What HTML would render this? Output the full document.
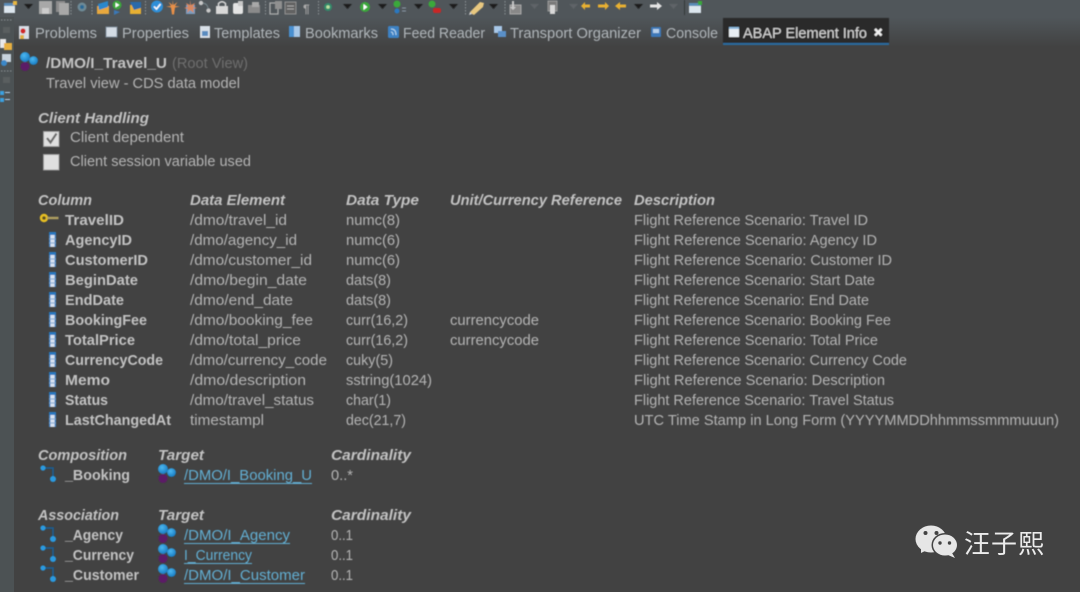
<!DOCTYPE html>
<html><head><meta charset="utf-8"><style>
html,body{margin:0;padding:0;background:#424242;width:1080px;height:592px;overflow:hidden}
svg{display:block}
text{font-family:"Liberation Sans","Noto Sans CJK SC",sans-serif;font-size:15px;fill:#b4b4b4}
.b{font-weight:bold;fill:#c2c2c2}
.h{font-weight:bold;font-style:italic;fill:#c2c2c2}
.l{fill:#62aed2}
.t{fill:#b0b6ba}
</style></head><body>
<svg width="1080" height="592" viewBox="0 0 1080 592" xmlns="http://www.w3.org/2000/svg">
<defs>
<linearGradient id="tabbg" x1="0" y1="0" x2="0" y2="1"><stop offset="0" stop-color="#50565a"/><stop offset="1" stop-color="#424242"/></linearGradient>
<radialGradient id="bl" cx=".4" cy=".35" r=".7"><stop offset="0" stop-color="#4cb8f0"/><stop offset="1" stop-color="#1478c0"/></radialGradient>
<filter id="soft" x="-5%" y="-5%" width="110%" height="110%"><feGaussianBlur stdDeviation="0.45"/></filter>
<g id="cds"><circle cx="6" cy="14.500" r="4.500" fill="#5c1a66"/><circle cx="6" cy="5" r="5" fill="url(#bl)"/><circle cx="14.500" cy="8.500" r="4.400" fill="url(#bl)"/></g>
<g id="assoc"><path d="M3 3H13V13" fill="none" stroke="#1a5f98" stroke-width="1.500"/><circle cx="3" cy="3" r="2.600" fill="#2a9ae0"/><circle cx="13" cy="14" r="3" fill="#2a9ae0"/></g>
<g id="col"><rect x="0" y="0" width="7" height="15" fill="#d8e2f0"/><rect x="0" y="0" width="7" height="3" fill="#2a78c0"/><rect x="0" y="3" width="1.500" height="12" fill="#4a88c8"/><rect x="5.500" y="3" width="1.500" height="12" fill="#4a88c8"/><rect x="0" y="6.500" width="7" height="1" fill="#7aa4d0"/><rect x="0" y="10.500" width="7" height="1" fill="#7aa4d0"/></g>
<polygon id="arr" points="0,0 9,0 4.500,5" fill="#1e1e1e"/>
</defs>
<rect width="1080" height="592" fill="#424242"/>
<rect width="1080" height="17" fill="#50565a"/>
<rect y="17" width="1080" height="30" fill="url(#tabbg)"/>
<rect y="17" width="14" height="575" fill="#4c5254"/>
<g filter="url(#soft)">
<!-- toolbar -->
<rect x="4" y="4" width="11" height="9" fill="#dce6ee"/><rect x="4" y="3" width="11" height="3" fill="#5a8cb8"/><rect x="13" y="1" width="4" height="4" fill="#e8b840"/>
<use href="#arr" x="24" y="4"/>
<rect x="39" y="1" width="13" height="13" fill="#a8a8a8"/><rect x="42" y="8" width="7" height="6" fill="#cccccc"/>
<rect x="56" y="1" width="9" height="11" fill="#8c8c8c"/><rect x="59" y="3" width="10" height="12" fill="#a8a8a8"/>
<path d="M71 1v14" stroke="#8c9296" stroke-dasharray="1.500 1.500"/>
<circle cx="82" cy="7" r="4.500" fill="#6e8a96"/><circle cx="82" cy="7" r="2" fill="#2a6a96"/>
<path d="M92 1v14" stroke="#8c9296" stroke-dasharray="1.500 1.500"/>
<rect x="97" y="6" width="12" height="8" fill="#e8a83c"/><path d="M98 4l10-3v6l-9 3z" fill="#2a88cc"/>
<circle cx="117" cy="5" r="4.500" fill="#3aa83a"/><path d="M115.500 2.500l4 2.500-4 2.500z" fill="#fff"/><path d="M114 10l6 2-6 3z" fill="#3a78b8"/>
<rect x="130" y="5" width="11" height="9" fill="#e8b030"/><path d="M130 2h11v6l-7 2z" fill="#2a6aaa"/>
<path d="M145.500 1v14" stroke="#8c9296" stroke-dasharray="1.500 1.500"/>
<circle cx="157" cy="6.500" r="6" fill="#2e8fd8"/><path d="M154 6.500l2.500 2.500 4-5" stroke="#fff" stroke-width="1.500" fill="none"/>
<path d="M172.500 0l1 5 4-3-2.500 4 5 .5-5 1-1 7h-2l-1-7-5-1 5-.5-2.500-4 4 3z" fill="#e89048"/>
<rect x="186" y="5" width="9" height="9" fill="#7a9cc0"/><path d="M190 0l1 5 4-2-2 4 4 1-4 1 1 4-4-3-3 3 1-4-4-1 4-1-2-4 4 2z" fill="#d88860"/>
<circle cx="201" cy="3" r="2.200" fill="#c8c8c8"/><circle cx="208.500" cy="10.500" r="2.200" fill="#c8c8c8"/><path d="M203 3q5 1 5 6" stroke="#7a8a90" fill="none"/>
<rect x="216" y="6" width="12" height="8" fill="#d8d8d8"/><path d="M218.500 6V3.500q3.500-3.500 7 0V6" fill="none" stroke="#d8d8d8" stroke-width="1.500"/>
<rect x="233" y="3" width="10" height="11" rx="2" fill="#e4e4e4"/><rect x="238" y="1" width="5" height="5" fill="#c8c8c8"/>
<rect x="248" y="5" width="12" height="8" fill="#8a8a8a"/><rect x="252" y="2" width="7" height="5" fill="#a8a8a8"/>
<path d="M265.500 1v14" stroke="#8c9296" stroke-dasharray="1.500 1.500"/>
<rect x="270" y="3" width="8" height="11" fill="none" stroke="#b0b0b0" stroke-width="1.200"/><rect x="275" y="1" width="7" height="8" fill="#909090"/>
<rect x="285" y="2" width="11" height="12" fill="#626262" stroke="#909090"/><path d="M287 6h7M287 9h7" stroke="#aaa"/>
<text x="303" y="13" style="font-size:12px;fill:#a8a8a8" font-weight="bold">¶</text>
<path d="M318.500 1v14" stroke="#8c9296" stroke-dasharray="1.500 1.500"/>
<circle cx="328" cy="7" r="4" fill="#308a6a"/><circle cx="328" cy="7" r="1.800" fill="#bce0a0"/>
<use href="#arr" x="343" y="4"/>
<circle cx="365" cy="7" r="5" fill="#3aa83a"/><path d="M363.500 4l4 3-4 3z" fill="#fff"/>
<use href="#arr" x="378" y="4"/>
<circle cx="397" cy="4" r="3.500" fill="#3aa83a"/><circle cx="397" cy="11" r="2.500" fill="#2a78c0"/><path d="M402 8h4M402 11h4" stroke="#8a9aa8"/>
<use href="#arr" x="414" y="4"/>
<circle cx="432" cy="4" r="3.500" fill="#3aa83a"/><rect x="433" y="8" width="8" height="5" rx="2" fill="#c82828"/>
<use href="#arr" x="449" y="4"/>
<path d="M465.500 1v14" stroke="#8c9296" stroke-dasharray="1.500 1.500"/>
<path d="M472 14l-2-2 10-10 4 1-1 4-9 8z" fill="#e8c880"/><path d="M470 12l2 2-3 1z" fill="#ddd"/>
<use href="#arr" x="489" y="4"/>
<path d="M505 1v14" stroke="#8c9296" stroke-dasharray="1.500 1.500"/>
<rect x="510" y="5" width="11" height="9" fill="#888" stroke="#a8a8a8"/><path d="M512 1v6h-2l3 3 3-3h-2V1z" fill="#c8c8c8"/>
<polygon points="530,4 539,4 534.500,9" fill="#5e6468"/>
<rect x="548" y="1" width="9" height="10" fill="#7a7a7a" stroke="#9a9a9a"/><path d="M550 5h5v9h-5z" fill="#d8d8d8"/>
<polygon points="569,4 578,4 573.500,9" fill="#5e6468"/>
<path d="M581 6l4-4v2.500h5v3h-5V10z" fill="#e8b030"/>
<path d="M609 6l-4-4v2.500h-7v3h7V10z" fill="#e8b030"/>
<path d="M615 6l5-4v2.500h6v3h-6V10z" fill="#e8b030"/>
<use href="#arr" x="634" y="4"/>
<path d="M662 6l-5-4v2.500h-7v3h7V10z" fill="#e4e4e4"/>
<polygon points="669,4 678,4 673.500,9" fill="#5e6468"/>
<rect x="684" y="0" width="1" height="15" fill="#33383a"/>
<rect x="689" y="4" width="12" height="9" fill="#dce6ee"/><rect x="689" y="3" width="12" height="3" fill="#5a8cb8"/><rect x="698" y="1" width="4" height="4" fill="#3aa83a"/>
<!-- tab icons -->
<rect x="19" y="26" width="10" height="13" fill="#d8dee6"/><circle cx="23" cy="31" r="2.600" fill="#d02828"/><rect x="20" y="35" width="4" height="4" fill="#e0b040"/>
<rect x="106" y="27" width="11" height="10" fill="#d4dce4" stroke="#7a8a9a"/>
<rect x="200" y="26" width="10" height="12" fill="#d8e0e8"/><rect x="202" y="31" width="6" height="5" fill="#5a8cc0"/>
<rect x="289" y="26" width="5" height="11" fill="#4a90d0"/><rect x="294" y="26" width="6" height="11" fill="#a8c8e8"/>
<rect x="388" y="26" width="11" height="12" rx="1.500" fill="#3e82c4"/><path d="M391 29q5 0 5 6M391 32q2 0 2 3" stroke="#b8d8f0" fill="none"/>
<rect x="494" y="26" width="8" height="7" fill="#a8c8e8"/><rect x="498" y="31" width="8" height="6" fill="#5a90c8"/>
<rect x="651" y="27" width="10" height="10" rx="1" fill="#3e78b8"/><rect x="653" y="29" width="6" height="4" fill="#b8d0ea"/>
<!-- active tab -->
<rect x="723" y="18" width="166" height="26" fill="#2a2a2a"/>
<rect x="723" y="43" width="166" height="2" fill="#2c6a9e"/>
<rect x="729" y="27" width="10" height="10" fill="#e8eef2"/><rect x="729" y="27" width="10" height="2" fill="#8cb8dc"/>
<path d="M875 29l6.500 6.500M881.500 29l-6.500 6.500" stroke="#f0f0f0" stroke-width="2.400"/>
<text x="35" y="38" textLength="62" lengthAdjust="spacingAndGlyphs" class="t">Problems</text>
<text x="122" y="38" textLength="67" lengthAdjust="spacingAndGlyphs" class="t">Properties</text>
<text x="214" y="38" textLength="66" lengthAdjust="spacingAndGlyphs" class="t">Templates</text>
<text x="305" y="38" textLength="73" lengthAdjust="spacingAndGlyphs" class="t">Bookmarks</text>
<text x="403" y="38" textLength="82" lengthAdjust="spacingAndGlyphs" class="t">Feed Reader</text>
<text x="510" y="38" textLength="131" lengthAdjust="spacingAndGlyphs" class="t">Transport Organizer</text>
<text x="666" y="38" textLength="52" lengthAdjust="spacingAndGlyphs" class="t">Console</text>
<text x="743" y="38" textLength="124" lengthAdjust="spacingAndGlyphs" style="fill:#d4d4d4">ABAP Element Info</text>
<!-- left strip -->
<path d="M1 20h12M1 71h12" stroke="#8c9296" stroke-dasharray="1.500 1.500"/>
<rect x="3" y="27" width="7" height="6" fill="#5a5e60"/>
<rect x="0" y="39" width="6" height="9" fill="#e8e8e8"/><rect x="4" y="43" width="8" height="7" fill="#e8b040"/>
<rect x="2" y="54" width="9" height="8" fill="#c8d4de"/><circle cx="4" cy="63" r="3" fill="#3a88c8"/>
<rect x="3" y="77" width="7" height="6" fill="#5a5e60"/>
<rect x="0" y="91" width="4" height="4" fill="#3aa0e0"/><rect x="0" y="98" width="4" height="4" fill="#3aa0e0"/><path d="M5 92.500h5M5 99.500h5" stroke="#b8d0e8"/>
<!-- header -->
<use href="#cds" x="19" y="52"/>
<text x="46" y="68" textLength="121" lengthAdjust="spacingAndGlyphs" class="b">/DMO/I_Travel_U</text>
<text x="172" y="68" textLength="76" lengthAdjust="spacingAndGlyphs" style="fill:#6e6e6e">(Root View)</text>
<text x="46" y="88" textLength="194" lengthAdjust="spacingAndGlyphs">Travel view - CDS data model</text>
<!-- client handling -->
<text x="38" y="123" textLength="111" lengthAdjust="spacingAndGlyphs" class="h">Client Handling</text>
<rect x="43.500" y="131.500" width="15.500" height="15" fill="#e0e0e0" stroke="#9a9a9a"/>
<path d="M47 138l3.500 4.500 6-9" fill="none" stroke="#6c6c6c" stroke-width="2.200"/>
<text x="70" y="142" textLength="114" lengthAdjust="spacingAndGlyphs">Client dependent</text>
<rect x="43.500" y="154.500" width="15.500" height="15.500" fill="#e0e0e0" stroke="#9a9a9a"/>
<text x="70" y="166" textLength="181" lengthAdjust="spacingAndGlyphs">Client session variable used</text>
<!-- table headers -->
<text x="38" y="205" textLength="54" lengthAdjust="spacingAndGlyphs" class="h">Column</text>
<text x="190" y="205" textLength="95" lengthAdjust="spacingAndGlyphs" class="h">Data Element</text>
<text x="346" y="205" textLength="73" lengthAdjust="spacingAndGlyphs" class="h">Data Type</text>
<text x="450" y="205" textLength="172" lengthAdjust="spacingAndGlyphs" class="h">Unit/Currency Reference</text>
<text x="634" y="205" textLength="81" lengthAdjust="spacingAndGlyphs" class="h">Description</text>
<!-- key icon -->
<circle cx="44" cy="218" r="3" fill="#5a5020" stroke="#e8c020" stroke-width="2.400"/><path d="M47 218h11.500" stroke="#b0a060" stroke-width="2.400"/>
<use href="#col" x="49" y="232"/><use href="#col" x="49" y="252"/><use href="#col" x="49" y="272"/><use href="#col" x="49" y="292"/><use href="#col" x="49" y="312"/><use href="#col" x="49" y="332"/><use href="#col" x="49" y="352"/><use href="#col" x="49" y="372"/><use href="#col" x="49" y="392"/><use href="#col" x="49" y="412"/>
<!-- column names -->
<text x="65" y="225" textLength="59" lengthAdjust="spacingAndGlyphs" class="b">TravelID</text>
<text x="65" y="245" textLength="67" lengthAdjust="spacingAndGlyphs" class="b">AgencyID</text>
<text x="65" y="265" textLength="83" lengthAdjust="spacingAndGlyphs" class="b">CustomerID</text>
<text x="65" y="285" textLength="73" lengthAdjust="spacingAndGlyphs" class="b">BeginDate</text>
<text x="65" y="305" textLength="59" lengthAdjust="spacingAndGlyphs" class="b">EndDate</text>
<text x="65" y="325" textLength="82" lengthAdjust="spacingAndGlyphs" class="b">BookingFee</text>
<text x="65" y="345" textLength="70" lengthAdjust="spacingAndGlyphs" class="b">TotalPrice</text>
<text x="65" y="365" textLength="98" lengthAdjust="spacingAndGlyphs" class="b">CurrencyCode</text>
<text x="65" y="385" textLength="45" lengthAdjust="spacingAndGlyphs" class="b">Memo</text>
<text x="65" y="405" textLength="43" lengthAdjust="spacingAndGlyphs" class="b">Status</text>
<text x="65" y="425" textLength="106" lengthAdjust="spacingAndGlyphs" class="b">LastChangedAt</text>
<!-- data elements -->
<text x="190" y="225" textLength="97" lengthAdjust="spacingAndGlyphs">/dmo/travel_id</text>
<text x="190" y="245" textLength="107" lengthAdjust="spacingAndGlyphs">/dmo/agency_id</text>
<text x="190" y="265" textLength="122" lengthAdjust="spacingAndGlyphs">/dmo/customer_id</text>
<text x="190" y="285" textLength="117" lengthAdjust="spacingAndGlyphs">/dmo/begin_date</text>
<text x="190" y="305" textLength="103" lengthAdjust="spacingAndGlyphs">/dmo/end_date</text>
<text x="190" y="325" textLength="123" lengthAdjust="spacingAndGlyphs">/dmo/booking_fee</text>
<text x="190" y="345" textLength="111" lengthAdjust="spacingAndGlyphs">/dmo/total_price</text>
<text x="190" y="365" textLength="137" lengthAdjust="spacingAndGlyphs">/dmo/currency_code</text>
<text x="190" y="385" textLength="116" lengthAdjust="spacingAndGlyphs">/dmo/description</text>
<text x="190" y="405" textLength="124" lengthAdjust="spacingAndGlyphs">/dmo/travel_status</text>
<text x="190" y="425" textLength="74" lengthAdjust="spacingAndGlyphs">timestampl</text>
<!-- types -->
<text x="346" y="225" textLength="54" lengthAdjust="spacingAndGlyphs">numc(8)</text>
<text x="346" y="245" textLength="54" lengthAdjust="spacingAndGlyphs">numc(6)</text>
<text x="346" y="265" textLength="54" lengthAdjust="spacingAndGlyphs">numc(6)</text>
<text x="346" y="285" textLength="45" lengthAdjust="spacingAndGlyphs">dats(8)</text>
<text x="346" y="305" textLength="45" lengthAdjust="spacingAndGlyphs">dats(8)</text>
<text x="346" y="325" textLength="62" lengthAdjust="spacingAndGlyphs">curr(16,2)</text>
<text x="346" y="345" textLength="62" lengthAdjust="spacingAndGlyphs">curr(16,2)</text>
<text x="346" y="365" textLength="47" lengthAdjust="spacingAndGlyphs">cuky(5)</text>
<text x="346" y="385" textLength="86" lengthAdjust="spacingAndGlyphs">sstring(1024)</text>
<text x="346" y="405" textLength="45" lengthAdjust="spacingAndGlyphs">char(1)</text>
<text x="346" y="425" textLength="60" lengthAdjust="spacingAndGlyphs">dec(21,7)</text>
<text x="450" y="325" textLength="89" lengthAdjust="spacingAndGlyphs">currencycode</text>
<text x="450" y="345" textLength="89" lengthAdjust="spacingAndGlyphs">currencycode</text>
<!-- descriptions -->
<text x="634" y="225" textLength="234" lengthAdjust="spacingAndGlyphs">Flight Reference Scenario: Travel ID</text>
<text x="634" y="245" textLength="243" lengthAdjust="spacingAndGlyphs">Flight Reference Scenario: Agency ID</text>
<text x="634" y="265" textLength="258" lengthAdjust="spacingAndGlyphs">Flight Reference Scenario: Customer ID</text>
<text x="634" y="285" textLength="241" lengthAdjust="spacingAndGlyphs">Flight Reference Scenario: Start Date</text>
<text x="634" y="305" textLength="235" lengthAdjust="spacingAndGlyphs">Flight Reference Scenario: End Date</text>
<text x="634" y="325" textLength="257" lengthAdjust="spacingAndGlyphs">Flight Reference Scenario: Booking Fee</text>
<text x="634" y="345" textLength="244" lengthAdjust="spacingAndGlyphs">Flight Reference Scenario: Total Price</text>
<text x="634" y="365" textLength="273" lengthAdjust="spacingAndGlyphs">Flight Reference Scenario: Currency Code</text>
<text x="634" y="385" textLength="251" lengthAdjust="spacingAndGlyphs">Flight Reference Scenario: Description</text>
<text x="634" y="405" textLength="260" lengthAdjust="spacingAndGlyphs">Flight Reference Scenario: Travel Status</text>
<text x="634" y="425" textLength="425" lengthAdjust="spacingAndGlyphs">UTC Time Stamp in Long Form (YYYYMMDDhhmmssmmmuuun)</text>
<!-- composition -->
<text x="38" y="460" textLength="89" lengthAdjust="spacingAndGlyphs" class="h">Composition</text>
<text x="158" y="460" textLength="46" lengthAdjust="spacingAndGlyphs" class="h">Target</text>
<text x="331" y="460" textLength="80" lengthAdjust="spacingAndGlyphs" class="h">Cardinality</text>
<use href="#assoc" x="40" y="465"/>
<text x="65" y="480" textLength="65" lengthAdjust="spacingAndGlyphs" class="b">_Booking</text>
<use href="#cds" x="157" y="464"/>
<text x="184" y="480" textLength="128" lengthAdjust="spacingAndGlyphs" class="l">/DMO/I_Booking_U</text>
<path d="M184 483.500h128" stroke="#62aed2"/>
<text x="331" y="480" textLength="22" lengthAdjust="spacingAndGlyphs">0..*</text>
<!-- association -->
<text x="38" y="520" textLength="81" lengthAdjust="spacingAndGlyphs" class="h">Association</text>
<text x="158" y="520" textLength="46" lengthAdjust="spacingAndGlyphs" class="h">Target</text>
<text x="331" y="520" textLength="80" lengthAdjust="spacingAndGlyphs" class="h">Cardinality</text>
<use href="#assoc" x="40" y="525"/><use href="#assoc" x="40" y="545"/><use href="#assoc" x="40" y="565"/>
<text x="65" y="540" textLength="58" lengthAdjust="spacingAndGlyphs" class="b">_Agency</text>
<text x="65" y="560" textLength="69" lengthAdjust="spacingAndGlyphs" class="b">_Currency</text>
<text x="65" y="580" textLength="74" lengthAdjust="spacingAndGlyphs" class="b">_Customer</text>
<use href="#cds" x="157" y="524"/><use href="#cds" x="157" y="544"/><use href="#cds" x="157" y="564"/>
<text x="184" y="540" textLength="106" lengthAdjust="spacingAndGlyphs" class="l">/DMO/I_Agency</text>
<path d="M184 543.500h106" stroke="#62aed2"/>
<text x="184" y="560" textLength="68" lengthAdjust="spacingAndGlyphs" class="l">I_Currency</text>
<path d="M184 563.500h68" stroke="#62aed2"/>
<text x="184" y="580" textLength="121" lengthAdjust="spacingAndGlyphs" class="l">/DMO/I_Customer</text>
<path d="M184 583.500h121" stroke="#62aed2"/>
<text x="331" y="540" textLength="22" lengthAdjust="spacingAndGlyphs">0..1</text>
<text x="331" y="560" textLength="22" lengthAdjust="spacingAndGlyphs">0..1</text>
<text x="331" y="580" textLength="22" lengthAdjust="spacingAndGlyphs">0..1</text>
</g>
<!-- watermark -->
<ellipse cx="931" cy="539" rx="15.500" ry="13.500" fill="#e6e6e6"/><path d="M921 548l0 5 6-3z" fill="#e6e6e6"/>
<circle cx="925.500" cy="533" r="2" fill="#424242"/><circle cx="936.500" cy="533" r="2" fill="#424242"/>
<ellipse cx="945" cy="545" rx="13.500" ry="12" fill="#424242"/>
<ellipse cx="945" cy="545" rx="12" ry="10.500" fill="#e6e6e6"/><path d="M952 553l3 5-7-3z" fill="#e6e6e6"/>
<circle cx="940" cy="543" r="1.700" fill="#424242"/><circle cx="949.500" cy="543" r="1.700" fill="#424242"/>
<text x="964" y="553" textLength="80" style="font-size:26px;fill:#ececec;font-family:'Noto Sans CJK SC','Liberation Sans',sans-serif">汪子熙</text>
</svg>
</body></html>
